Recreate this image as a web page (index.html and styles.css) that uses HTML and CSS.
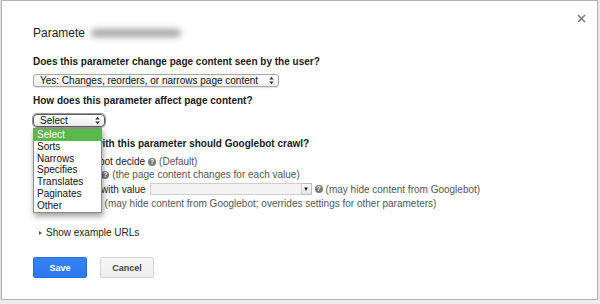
FILE: index.html
```html
<!DOCTYPE html>
<html>
<head>
<meta charset="utf-8">
<link rel="stylesheet" href="styles.css">
</head>
<body>
<div class="dialog">
  <div class="header">
    <h1 class="title">Paramete<span class="redact"></span></h1>
    <span class="close"><svg width="9" height="9" viewBox="0 0 9 9"><path d="M1 1L8 8M8 1L1 8" stroke="#7a7a7a" stroke-width="1.6" fill="none"/></svg></span>
  </div>
  <div class="label l1">Does this parameter change page content seen by the user?</div>
  <div class="select s1"><span>Yes: Changes, reorders, or narrows page content</span><svg class="arrows" width="5" height="9" viewBox="0 0 5 9"><path d="M0.3 3.6L2.5 0.8L4.7 3.6Z M0.3 5.4L2.5 8.2L4.7 5.4Z" fill="#333"/></svg></div>
  <div class="label l2">How does this parameter affect page content?</div>
  <div class="select-wrap">
    <div class="select s2"><span>Select</span><svg class="arrows" width="5" height="9" viewBox="0 0 5 9"><path d="M0.3 3.6L2.5 0.8L4.7 3.6Z M0.3 5.4L2.5 8.2L4.7 5.4Z" fill="#333"/></svg></div>
    <ul class="menu">
      <li class="active">Select</li>
      <li>Sorts</li>
      <li>Narrows</li>
      <li>Specifies</li>
      <li>Translates</li>
      <li>Paginates</li>
      <li>Other</li>
    </ul>
  </div>
  <div class="label l3">Which URLs with this parameter should Googlebot crawl?</div>
  <div class="options">
    <div class="opt r1"><span class="radio"></span>Let Googlebot decide <span class="help">?</span> <span class="hint">(Default)</span></div>
    <div class="opt r2"><span class="radio"></span>Every URL <span class="help">?</span> <span class="hint">(the page content changes for each value)</span></div>
    <div class="opt r3"><span class="radio"></span>Only URLs with value <span class="combo"><span class="field"></span><span class="drop">&#9660;</span></span> <span class="help">?</span> <span class="hint">(may hide content from Googlebot)</span></div>
    <div class="opt r4"><span class="radio"></span>No URLs <span class="help">?</span> <span class="hint">(may hide content from Googlebot; overrides settings for other parameters)</span></div>
  </div>
  <div class="examples"><span class="tri"></span>Show example URLs</div>
  <div class="buttons">
    <button class="btn primary">Save</button>
    <button class="btn">Cancel</button>
  </div>
</div>
</body>
</html>
```
FILE: styles.css
```css
html, body {
  margin: 0;
  padding: 0;
}
body {
  background: #ededed;
  font-family: "Liberation Sans", Arial, sans-serif;
  font-size: 10px;
  color: #222;
}
.dialog {
  box-sizing: border-box;
  width: 597px;
  margin-left: 1px;
  background: #fff;
  border: 1px solid #b4b4b4;
  padding: 13px 11px 21px 31px;
  box-shadow: 0 1px 2px rgba(0,0,0,0.15);
}
.header {
  display: flex;
  justify-content: space-between;
  align-items: flex-start;
  height: 40px;
}
.title {
  margin: 11px 0 0 0;
  font-size: 12px;
  line-height: 16px;
  font-weight: normal;
  color: #222;
  display: flex;
  align-items: center;
}
.redact {
  display: inline-block;
  width: 90px;
  height: 8px;
  margin-left: 6px;
  background: #a4a4a4;
  border-radius: 4px;
  filter: blur(3px);
}
.close {
  display: block;
  width: 9px;
  height: 9px;
  margin-top: 0;
}
.close svg { display: block; }
.label {
  font-weight: bold;
  line-height: 12px;
  color: #1a1a1a;
}
.l1 { margin-top: 2px; }
.l2 { margin-top: 8px; }
.l3 { margin-top: 11px; }
.select {
  box-sizing: border-box;
  height: 13px;
  display: flex;
  align-items: center;
  justify-content: space-between;
  padding: 0 4px 0 6px;
  border: 1px solid #a6a6a6;
  border-radius: 3px;
  background: linear-gradient(#ffffff, #ececec);
  box-shadow: 0 1px 1px rgba(0,0,0,0.12);
  color: #111;
  line-height: 11px;
}
.s1 {
  width: 246px;
  margin-top: 6px;
}
.select-wrap {
  position: relative;
  margin-top: 7px;
}
.s2 {
  width: 72px;
  border: 1px solid #5a5a5a;
  border-radius: 4px;
  box-shadow: 0 0 0 1px #9a9a9a;
}
.arrows { display: block; }
.menu {
  position: absolute;
  left: 0;
  top: 14px;
  width: 69px;
  box-sizing: border-box;
  margin: 0;
  padding: 0;
  list-style: none;
  background: #fff;
  border: 1px solid #8c8c8c;
  box-shadow: 1px 3px 6px rgba(0,0,0,0.4);
  z-index: 5;
}
.menu li {
  height: 11.8px;
  line-height: 11.8px;
  padding-left: 3px;
  color: #111;
}
.menu li.active {
  background: #5bb84a;
  color: #fff;
}
.options {
  margin-top: 5px;
  color: #222;
}
.opt {
  display: flex;
  align-items: center;
  white-space: nowrap;
}
.opt.r1, .opt.r2 { height: 13px; }
.opt.r3 { height: 16px; }
.opt.r4 { height: 12px; }
.radio {
  box-sizing: border-box;
  width: 9px;
  height: 9px;
  border: 1px solid #888;
  border-radius: 50%;
  margin: 0 4px 0 4px;
  background: #fff;
}
.help {
  display: inline-block;
  width: 8px;
  height: 8px;
  border-radius: 50%;
  background: #7a7a7a;
  color: #fff;
  font-size: 7px;
  font-weight: bold;
  line-height: 8px;
  text-align: center;
  margin: 0 3px;
}
.hint {
  color: #555;
}
.combo {
  display: inline-flex;
  margin-left: 4px;
  height: 12px;
}
.field {
  box-sizing: border-box;
  width: 152px;
  height: 12px;
  border: 1px solid #cfcfcf;
  background: #f4f4f4;
}
.drop {
  box-sizing: border-box;
  width: 10px;
  height: 12px;
  border: 1px solid #bcbcbc;
  border-left: none;
  background: linear-gradient(#fafafa, #e6e6e6);
  font-size: 6px;
  line-height: 10px;
  text-align: center;
  color: #111;
}
.examples {
  margin-top: 18px;
  line-height: 12px;
  display: flex;
  align-items: center;
  color: #222;
}
.tri {
  width: 0;
  height: 0;
  border-top: 2.5px solid transparent;
  border-bottom: 2.5px solid transparent;
  border-left: 3px solid #555;
  margin: 0 4px 0 6px;
}
.buttons {
  display: flex;
  gap: 13px;
  margin-top: 18px;
}
.btn {
  box-sizing: border-box;
  width: 54px;
  height: 21px;
  padding: 0;
  font-family: "Liberation Sans", Arial, sans-serif;
  font-size: 9px;
  font-weight: bold;
  border-radius: 2px;
  border: 1px solid #d6d6d6;
  background: linear-gradient(#f6f6f6, #eeeeee);
  color: #444;
}
.btn.primary {
  border: 1px solid #2b6fd6;
  background: linear-gradient(#3583f5, #2c78ee);
  color: #fff;
}
```
